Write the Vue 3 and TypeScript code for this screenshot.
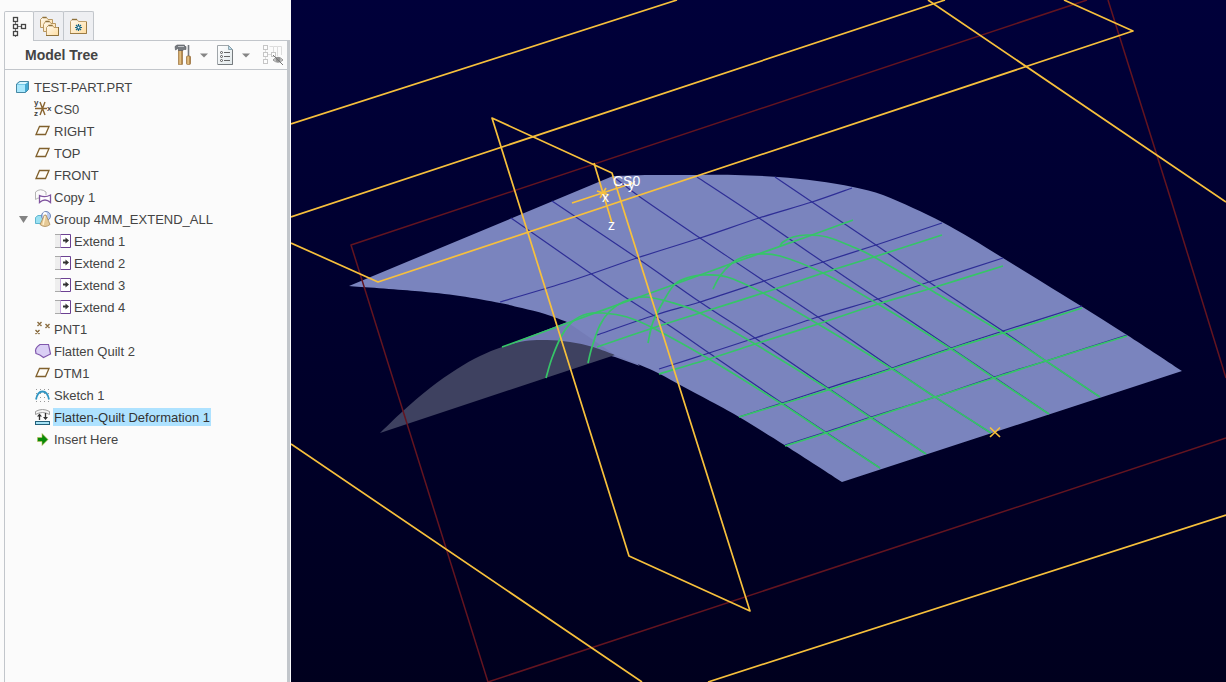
<script setup lang="ts">
import { computed, ref } from 'vue'

type IconName =
  | 'part' | 'csys' | 'plane' | 'copy' | 'group' | 'extend'
  | 'points' | 'quilt' | 'sketch' | 'deform' | 'insert'

interface TreeNode {
  label: string
  icon: IconName
  depth: 0 | 1 | 2
  expandable?: boolean
}

type Point = [number, number]

const nodes: TreeNode[] = [
  { label: 'TEST-PART.PRT', icon: 'part', depth: 0 },
  { label: 'CS0', icon: 'csys', depth: 1 },
  { label: 'RIGHT', icon: 'plane', depth: 1 },
  { label: 'TOP', icon: 'plane', depth: 1 },
  { label: 'FRONT', icon: 'plane', depth: 1 },
  { label: 'Copy 1', icon: 'copy', depth: 1 },
  { label: 'Group 4MM_EXTEND_ALL', icon: 'group', depth: 1, expandable: true },
  { label: 'Extend 1', icon: 'extend', depth: 2 },
  { label: 'Extend 2', icon: 'extend', depth: 2 },
  { label: 'Extend 3', icon: 'extend', depth: 2 },
  { label: 'Extend 4', icon: 'extend', depth: 2 },
  { label: 'PNT1', icon: 'points', depth: 1 },
  { label: 'Flatten Quilt 2', icon: 'quilt', depth: 1 },
  { label: 'DTM1', icon: 'plane', depth: 1 },
  { label: 'Sketch 1', icon: 'sketch', depth: 1 },
  { label: 'Flatten-Quilt Deformation 1', icon: 'deform', depth: 1 },
  { label: 'Insert Here', icon: 'insert', depth: 1 },
]

const groupOpen = ref(true)
const selected = ref('Flatten-Quilt Deformation 1')
const visibleNodes = computed(() => nodes.filter((n) => n.depth < 2 || groupOpen.value))

// Smooth open curve through a list of points (Catmull-Rom converted to cubic segments).
function curve(pts: Point[]): string {
  let d = `M${pts[0][0]} ${pts[0][1]}`
  for (let i = 0; i < pts.length - 1; i++) {
    const a = pts[Math.max(i - 1, 0)]
    const b = pts[i]
    const c = pts[i + 1]
    const e = pts[Math.min(i + 2, pts.length - 1)]
    d += `C${b[0] + (c[0] - a[0]) / 6} ${b[1] + (c[1] - a[1]) / 6} `
    d += `${c[0] - (e[0] - b[0]) / 6} ${c[1] - (e[1] - b[1]) / 6} ${c[0]} ${c[1]}`
  }
  return d
}

const joined = (d: string) => d.replace(/^M/, 'L')

const topEdge: Point[] = [[613, 176], [650, 175], [690, 175], [735, 175], [778, 177], [817, 181], [853, 187], [883, 195], [913, 208], [942, 222], [972, 239], [1003, 258], [1042, 282], [1081, 306], [1127, 335], [1182, 371]]
const frontEdge: Point[] = [[842, 482], [786, 446], [739, 417], [710, 401], [682, 386], [660, 374], [640, 365], [615, 355]]
const leftEdge: Point[] = [[567, 322], [545, 314], [522, 308], [500, 303], [460, 296], [415, 291], [349, 286]]
const undersideEdge: Point[] = [[380, 433], [403, 411], [430, 388], [457, 369], [480, 356], [502, 347], [525, 341], [547, 340], [570, 342], [593, 347], [615, 355]]

const surface = curve(topEdge) + joined(curve(frontEdge)) + joined(curve(leftEdge)) + 'Z'
const underside = curve(undersideEdge) + 'Z'
const fold = 'M502 347L567 322L600 330L640 366L615 357L580 348H520Z'

const blueLines: string[] = ([
  [[511, 218], [590, 273], [628, 299], [670, 326], [709, 353], [782, 403], [880, 468]],
  [[552, 201], [637, 258], [700, 302], [755, 338], [828, 388], [926, 454]],
  [[615, 178], [640, 197], [700, 238], [764, 281], [818, 317], [892, 368], [935, 397], [991, 433]],
  [[697, 177], [759, 218], [823, 262], [878, 299], [951, 348], [994, 377], [1049, 414]],
  [[775, 177], [812, 202], [876, 245], [929, 282], [1003, 331], [1046, 361], [1100, 397]],
  [[500, 302], [570, 281], [637, 258], [700, 238], [759, 218], [812, 202], [852, 188]],
  [[597, 335], [655, 315], [700, 302], [764, 281], [823, 262], [876, 245], [942, 223]],
  [[659, 369], [709, 353], [755, 338], [818, 317], [878, 299], [929, 282], [1003, 258]],
  [[739, 417], [782, 403], [828, 388], [892, 368], [951, 348], [1003, 331], [1082, 306]],
  [[785, 445], [826, 432], [871, 417], [935, 397], [994, 377], [1046, 361], [1127, 335]],
] as Point[][]).map(curve)

const greenLines: string[] = ([
  [[502, 347], [573, 321], [617, 305], [670, 286], [733, 263], [812, 235], [853, 220]],
  [[597, 347], [653, 328], [700, 313], [763, 293], [823, 273], [874, 257], [942, 235]],
  [[659, 374], [709, 359], [755, 344], [818, 324], [878, 304], [929, 289], [1003, 266]],
  [[739, 417], [782, 404], [828, 390], [892, 369], [951, 349], [1003, 333], [1082, 308]],
  [[785, 446], [826, 433], [871, 418], [935, 397], [994, 378], [1046, 361], [1127, 336]],
  [[546, 378], [552, 358], [562, 335], [573, 321], [587, 314], [603, 313], [627, 317], [653, 328], [709, 359], [782, 404], [826, 433], [880, 468]],
  [[588, 363], [592, 347], [600, 325], [610, 311], [623, 302], [643, 297], [670, 302], [700, 313], [755, 344], [828, 389], [871, 418], [926, 454]],
  [[648, 343], [653, 322], [663, 302], [675, 284], [690, 277], [703, 275], [727, 277], [763, 293], [818, 324], [892, 369], [935, 397], [991, 433]],
  [[713, 289], [720, 276], [732, 263], [743, 257], [757, 254], [780, 256], [823, 273], [878, 304], [951, 349], [994, 378], [1049, 414]],
  [[780, 246], [783, 242], [793, 237], [807, 235], [827, 237], [853, 247], [874, 257], [929, 289], [1003, 333], [1046, 361], [1100, 397]],
] as Point[][]).map(curve)

const dots: Point[] = [5, 9, 13, 17].flatMap((y) => [0, 4, 8, 12].map((x): Point => [x + 1, y]))
</script>

<template>
  <main class="app">
    <aside class="sidebar">
      <div class="tabs" role="tablist" aria-label="Navigator">
        <button class="tab active" role="tab" aria-selected="true" aria-label="Model Tree">
          <svg width="28" height="28" viewBox="0 0 28 28">
            <path d="M10.500 5V24M10 13.500H18" stroke="#777" fill="none" />
            <g fill="#fff" stroke="#454545" stroke-width="1.300">
              <rect x="8.500" y="4.500" width="4" height="4" /><rect x="8.500" y="11.500" width="4" height="4" />
              <rect x="8.500" y="18.500" width="4" height="4" /><rect x="16.500" y="11.500" width="4" height="4" />
            </g>
          </svg>
        </button>
        <button class="tab" role="tab" aria-selected="false" aria-label="Folder Browser">
          <svg width="28" height="28" viewBox="0 0 28 28">
            <defs>
              <linearGradient id="folder" x1="0" y1="0" x2="1" y2="1">
                <stop offset="0" stop-color="#fffaf0" /><stop offset="1" stop-color="#ffdda0" />
              </linearGradient>
            </defs>
            <g fill="url(#folder)" stroke="#b99862">
              <path d="M6.500 15.500V7.500L8.500 5.500H12.500L14 7.500H18.500V15.500Z" />
              <path d="M9.500 19.500V12.500L11.500 9.500H15.500L17 11.500H21.500V19.500Z" />
              <path d="M12.500 23.500V15.500L14.500 13.500H18.500L20 15.500H24.500V23.500Z" />
            </g>
            <path d="M8.500 5.500H12.500M11.500 9.500H15.500M14.500 13.500H18.500" stroke="#8e713b" stroke-width="1.400" />
            <path d="M12 23.500H24.500V15" fill="none" stroke="#8e713b" />
          </svg>
        </button>
        <button class="tab" role="tab" aria-selected="false" aria-label="Favorites">
          <svg width="28" height="28" viewBox="0 0 28 28">
            <path d="M6.500 21.500V9.500L8 7.500H13L14.500 9.500H22.500V21.500Z" fill="url(#folder)" stroke="#c0a06a" />
            <path d="M8 7.500H13" stroke="#8e713b" stroke-width="1.400" />
            <path d="M6 21.500H22.500V10" fill="none" stroke="#9b7b44" />
            <path d="M14.500 12V19M11 15.500H18M12 13L17 18M17 13L12 18" stroke="#116487" stroke-width="1.200" />
            <circle cx="14.500" cy="15.500" r="1" fill="#fff" />
          </svg>
        </button>
      </div>

      <section class="panel">
        <header class="panel-head">
          <h1>Model Tree</h1>
          <div class="tools">
            <button class="tool" aria-label="Settings">
              <svg width="20" height="22" viewBox="0 0 20 22">
                <defs>
                  <linearGradient id="wood"><stop offset="0" stop-color="#a87835" /><stop offset=".4" stop-color="#f2d296" /><stop offset="1" stop-color="#8c5c20" /></linearGradient>
                </defs>
                <rect x="4.500" y="6" width="4" height="14.500" fill="url(#wood)" stroke="#99703a" stroke-width=".6" />
                <path d="M1 2.500L3 1H10.500V2.500H12V5.500H10L8.500 6.500H4.500V4L1.500 6Z" fill="#777b80" stroke="#53565a" stroke-width=".6" />
                <path d="M4 2.500H10" stroke="#c2c5c8" />
                <path d="M14.500 1V12" stroke="#73777c" stroke-width="1.600" />
                <rect x="12.500" y="12" width="4" height="8.500" rx="1" fill="url(#wood)" stroke="#96672b" stroke-width=".6" />
              </svg>
            </button>
            <button class="caret" aria-label="Settings menu"><svg width="8" height="5" viewBox="0 0 8 5"><path d="M0 .5H8L4 4.500Z" fill="#858585" /></svg></button>
            <button class="tool" aria-label="Display">
              <svg width="20" height="22" viewBox="0 0 20 22">
                <defs>
                  <linearGradient id="sheet" x1="0" y1="0" x2="1" y2="1"><stop offset="0" stop-color="#fff" /><stop offset="1" stop-color="#e1e8ea" /></linearGradient>
                </defs>
                <path d="M1.500 1.500H12.500L16.500 5.500V20.500H1.500Z" fill="url(#sheet)" stroke="#a0a6aa" />
                <path d="M12.500 1.500L16.500 5.500H12.500Z" fill="#b9dcec" stroke="#7e949e" stroke-width=".8" />
                <path d="M16.500 6V20.500H2" fill="none" stroke="#767b7e" />
                <g fill="#fff" stroke="#555"><circle cx="5.500" cy="8.500" r="1" /><circle cx="5.500" cy="12.500" r="1" /><circle cx="5.500" cy="16.500" r="1" /></g>
                <path d="M8 8.500H14M8 12.500H14M8 16.500H14" stroke="#666" />
              </svg>
            </button>
            <button class="caret" aria-label="Display menu"><svg width="8" height="5" viewBox="0 0 8 5"><path d="M0 .5H8L4 4.500Z" fill="#858585" /></svg></button>
            <button class="tool hide-tool" aria-label="Hidden items" disabled>
              <svg width="22" height="22" viewBox="0 0 22 22">
                <path d="M7.500 2.500H11.500V8M11.500 2.500H15.500V12M15.500 2.500H19.500V11M3.500 6V15M6 10.500H9" stroke="#dcdcdc" fill="none" />
                <g fill="#fdfdfd" stroke="#c6c6c6"><rect x="1.500" y="1.500" width="4" height="4" /><rect x="1.500" y="8.500" width="4" height="4" /><rect x="1.500" y="15.500" width="4" height="4" /><rect x="9.500" y="8.500" width="4" height="4" /></g>
                <path d="M11 16Q16 10.500 21 16Q16 20.500 11 16Z" fill="#d5d5d5" stroke="#929292" />
                <circle cx="16" cy="15.500" r="2.500" fill="#909090" />
                <path d="M11 11L21 21" stroke="#777" />
              </svg>
            </button>
          </div>
        </header>

        <ul class="tree" role="tree" aria-label="Model Tree">
          <li
            v-for="node in visibleNodes"
            :key="node.label"
            class="row"
            :class="`depth-${node.depth}`"
            role="treeitem"
            :aria-level="node.depth + 1"
            :aria-selected="selected === node.label"
          >
            <button v-if="node.expandable" class="twisty" :aria-expanded="groupOpen" aria-label="Toggle group" @click="groupOpen = !groupOpen">
              <svg width="9" height="22" viewBox="0 0 9 22"><path :d="groupOpen ? 'M0 8H9L4.500 15Z' : 'M1 6.500V15.500L8 11Z'" fill="#838383" /></svg>
            </button>
            <svg class="icon" width="18" height="22" viewBox="0 0 18 22" aria-hidden="true">
              <template v-if="node.icon === 'part'">
                <path d="M1.500 8L4.500 5.500H13.500V13.500L10.500 16.500H1.500Z" fill="#45a9d2" stroke="#4788a4" />
                <path d="M2 8.500H10V16H2Z" fill="#a9e8fd" />
                <path d="M2.500 8L5 6H13L10.500 8Z" fill="#d8f6ff" />
              </template>
              <template v-else-if="node.icon === 'csys'">
                <path d="M0 10.500H12M5 4L10 17M10 4L5 17" stroke="#8a6530" stroke-width="1.400" fill="none" />
                <g class="axis-text"><text x="-1" y="7">y</text><text x="-1" y="18">z</text><text x="12" y="13">x</text></g>
              </template>
              <path v-else-if="node.icon === 'plane'" d="M4.500 6.500H14L10.500 14.500H1Z" fill="#fffdf8" stroke="#80602c" stroke-width="1.300" />
              <template v-else-if="node.icon === 'copy'">
                <path d="M.5 13.500V6Q5.500 1.500 11 6V9M.5 13.500Q3 11.500 5 12" fill="#fbfbfb" stroke="#b4b4b4" />
                <path d="M4.500 16.500V9.500Q10 12 15.500 9V16.500Q10 11.500 4.500 16.500Z" fill="#fff" stroke="#80559f" stroke-width="1.300" />
              </template>
              <template v-else-if="node.icon === 'group'">
                <path d="M.5 9.500L3 7.500H10V15.500H.5Z" fill="#9be1f2" stroke="#5fb6d0" />
                <circle cx="11" cy="8" r="4.500" fill="#bccdf0" stroke="#7087b8" /><circle cx="10" cy="6" r="2" fill="#fff" />
                <path d="M9.500 7H11L15 16.500Q10 20.500 5 16.500Z" fill="#e6c995" stroke="#a98a58" stroke-width=".8" />
                <path d="M10 8L8 17" stroke="#fff0d0" stroke-width="1.400" />
              </template>
              <template v-else-if="node.icon === 'extend'">
                <rect x="0" y="5" width="6" height="12" fill="#eee" /><path d="M0 4.500H5.500M0 17.500H5.500" stroke="#a9a9a9" />
                <path d="M5.500 4.500H15.500V17.500H5.500" fill="#fff" stroke="#6c4192" />
                <path d="M5.500 5V17" stroke="#c3a2dc" />
                <path d="M8 10.500H12" stroke="#333" stroke-width="2" /><path d="M10.500 7.500L14 10.500L10.500 13.500Z" fill="#333" />
              </template>
              <path v-else-if="node.icon === 'points'" d="M2.500 4L6.500 8M6.500 4L2.500 8M10.500 6L14.500 10M14.500 6L10.500 10M.5 12L4.500 16M4.500 12L.5 16" stroke="#8a6d40" stroke-width="1.400" />
              <path v-else-if="node.icon === 'quilt'" d="M.5 10.500Q1 7 5 4.500L13.500 4.500L15.500 14L8.500 17.500Q5 14.500 1 13.500Z" fill="#dacff5" stroke="#8058ad" stroke-width="1.200" />
              <template v-else-if="node.icon === 'sketch'">
                <rect v-for="(p, i) in dots" :key="i" :x="p[0]" :y="p[1]" width="1" height="1" fill="#999" />
                <path d="M1 15.500Q2.500 7.500 7.500 7.500T14 15.500" fill="none" stroke="#2f95c2" stroke-width="1.800" />
              </template>
              <template v-else-if="node.icon === 'deform'">
                <path d="M.5 5.500Q7.500 1.500 14.500 5.500V8.500Q7.500 4.500 .5 8.500Z" fill="#f4f4f4" stroke="#9c9c9c" />
                <path d="M4.500 14V9M10.500 7V12" stroke="#333" stroke-width="1.300" />
                <path d="M2 10.500L4.500 7.500L7 10.500ZM8 11L10.500 14L13 11Z" fill="#333" />
                <rect x=".5" y="15.500" width="14" height="3" fill="#a5e2f5" stroke="#225f79" />
              </template>
              <template v-else>
                <path d="M2.500 9.500H7V5.500L13 11.500L7 17.500V13.500H2.500Z" fill="#078a07" stroke="#c3bc55" stroke-width=".6" />
              </template>
            </svg>
            <button class="label" :class="{ selected: selected === node.label }" @click="selected = node.label">{{ node.label }}</button>
          </li>
        </ul>
      </section>
    </aside>

    <section class="viewport" aria-label="Graphics area">
      <svg class="scene" viewBox="291 0 935 682" preserveAspectRatio="xMinYMin slice">
        <path :d="fold" fill="#747cb6" />
        <path :d="underside" fill="#3e4160" />
        <path :d="surface" fill="#7a84be" />
        <path class="datum-dark" d="M1087 0L351 245L488 682L1226 438M1108 0L1171 200L1226 378" />
        <g class="mesh"><path v-for="(d, i) in blueLines" :key="i" :d="d" /></g>
        <g class="sketch-lines"><path v-for="(d, i) in greenLines" :key="i" :d="d" /></g>
        <g class="datum">
          <path d="M291 124L677 0M291 217L945 0M928 0L1226 202" />
          <path d="M291 243L378 282L1133 31L1064 0" />
          <path d="M492 118L612 173L750 611L629 556Z" />
          <path d="M291 444L642 682M708 682L1226 515" />
          <path d="M572 203L633 183M594 163L612 223M597 191L609 195M600 198L606 188" />
          <path d="M990 427.500L1000 437M1000 427.500L990 437" />
        </g>
        <g class="note">
          <text x="613" y="186">CS0</text><text x="628" y="189">y</text><text x="602" y="202">x</text><text x="608" y="230">z</text>
        </g>
      </svg>
    </section>
  </main>
</template>

<style>
html, body { margin: 0; background: #fbfbfb; }
</style>

<style scoped>
.app {
  display: flex;
  height: 100vh;
  overflow: hidden;
  font-family: "Liberation Sans", Arial, sans-serif;
  font-size: 13px;
  color: #444;
}
.sidebar {
  box-sizing: border-box;
  display: flex;
  flex: 0 0 291px;
  flex-direction: column;
  padding: 11px 1px 0 4px;
  background: #fbfbfb;
}
button {
  margin: 0;
  padding: 0;
  border: 0;
  background: none;
  font: inherit;
  color: inherit;
}
button svg { display: block; }
.tabs { display: flex; height: 29px; }
.tab {
  position: relative;
  box-sizing: border-box;
  width: 31px;
  height: 29px;
  margin-right: -1px;
  border: 1px solid #c2c6cb;
  border-bottom: 0;
  border-radius: 2px 2px 0 0;
  background: #eeeff2;
}
.tab.active {
  z-index: 1;
  width: 30px;
  height: 30px;
  background: #fbfbfb;
}
.panel {
  flex: 1;
  min-height: 0;
  border: 1px solid #c2c6cb;
  border-right: 3px solid #c2c6cb;
  border-bottom: 0;
}
.panel-head {
  display: flex;
  align-items: center;
  justify-content: space-between;
  height: 28px;
  padding: 0 3px 0 20px;
  border-bottom: 1px solid #c2c6cb;
}
h1 { margin: 0; font-size: 14px; line-height: 20px; }
.tools { display: flex; align-items: center; }
.tool { height: 22px; }
.caret { width: 8px; height: 5px; margin: 0 8px 0 6px; }
.hide-tool { margin-left: 4px; }
.tree { margin: 0; padding: 6px 0; list-style: none; }
.row { display: flex; align-items: center; height: 22px; }
.depth-0 { padding-left: 10px; }
.depth-1 { padding-left: 30px; }
.depth-2 { padding-left: 50px; }
.icon { flex: none; overflow: visible; }
.twisty { width: 9px; margin-left: -16px; margin-right: 7px; }
.label {
  box-sizing: border-box;
  height: 18px;
  padding: 2px 1px 0;
  line-height: 16px;
  white-space: nowrap;
}
.label.selected { background: #aee2ff; color: #333; }
.axis-text { font-size: 8px; font-weight: bold; fill: #444; }
.viewport {
  flex: 1;
  min-width: 0;
  background: linear-gradient(#00003a, #00001e);
}
.scene { display: block; width: 100%; height: 100%; }
.scene path { stroke-linejoin: round; }
.datum-dark, .datum, .mesh, .sketch-lines { fill: none; }
.datum-dark { stroke: #641420; stroke-width: 1.5; }
.datum { stroke: #f7c03c; stroke-width: 1.7; }
.mesh { stroke: #2e2e96; stroke-width: 1.2; }
.sketch-lines { stroke: #36c568; stroke-width: 1.7; }
.note { font-size: 14px; fill: #fff; }
</style>
